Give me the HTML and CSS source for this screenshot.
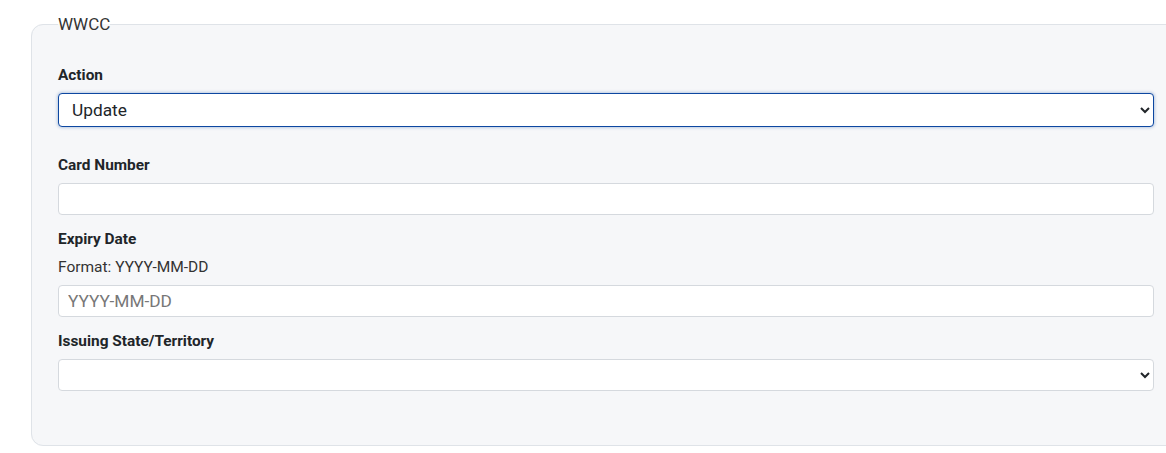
FILE: index.html
```html
<!DOCTYPE html>
<html lang="en">
<head>
<meta charset="utf-8">
<title>WWCC</title>
<link rel="stylesheet" href="styles.css">
</head>
<body>
<form class="form">
  <fieldset class="panel">
    <legend class="panel-legend">WWCC</legend>
    <div class="group group-first">
      <label class="label" for="action">Action</label>
      <select id="action" class="control select is-focused">
        <option>Update</option>
      </select>
    </div>
    <div class="group">
      <label class="label" for="card">Card Number</label>
      <input id="card" class="control input" type="text">
    </div>
    <div class="group">
      <label class="label" for="expiry">Expiry Date</label>
      <div class="hint">Format: YYYY-MM-DD</div>
      <input id="expiry" class="control input" type="text" placeholder="YYYY-MM-DD">
    </div>
    <div class="group">
      <label class="label" for="state">Issuing State/Territory</label>
      <select id="state" class="control select">
        <option></option>
      </select>
    </div>
  </fieldset>
</form>
</body>
</html>
```
FILE: styles.css
```css
html, body {
  margin: 0;
  padding: 0;
  background: #ffffff;
  font-family: Roboto, "Liberation Sans", Arial, sans-serif;
  color: #212529;
}

.form {
  padding: 0 0 0 31px;
  width: 1150px;
}

.panel {
  margin: 14px 0 0 0;
  padding: 31px 26px 54px 26px;
  border: 1px solid #dfe3e8;
  border-radius: 12px;
  background: #f6f7f9;
  min-width: 0;
}

.panel-legend {
  padding: 0;
  font-size: 17px;
  color: #333;
  line-height: 20px;
}

.group {
  margin-bottom: 14px;
}

.group-first {
  margin-bottom: 28px;
}

.group:last-child {
  margin-bottom: 0;
}

.label {
  display: block;
  font-size: 15.4px;
  font-weight: 700;
  line-height: 21px;
  margin-bottom: 7px;
  color: #212529;
}

.hint {
  font-size: 15.5px;
  line-height: 21px;
  color: #333;
  margin-top: 1px;
  margin-bottom: 7px;
}

.control {
  display: block;
  box-sizing: border-box;
  width: 100%;
  margin: 0;
  background: #fff;
  border: 1px solid #d5d9de;
  border-radius: 4px;
  font-family: Roboto, "Liberation Sans", Arial, sans-serif;
  font-size: 17.3px;
  color: #212529;
}

.input {
  height: 32px;
  padding: 0 9px;
}

.input::placeholder {
  color: #777;
}

.select {
  height: 32px;
  padding: 0 9px;
}

.select.is-focused {
  height: 34px;
  border-color: #0d47a1;
  box-shadow: 0 0 3px 1px rgba(13, 71, 161, 0.25);
}
```
